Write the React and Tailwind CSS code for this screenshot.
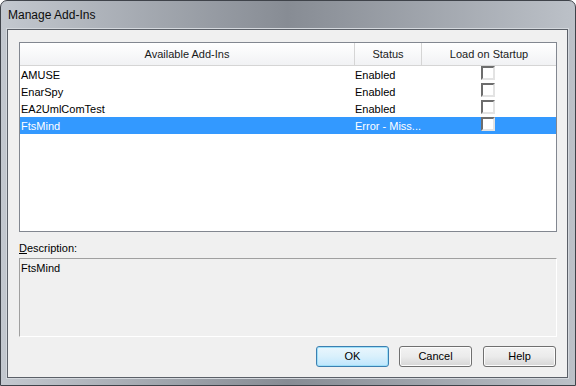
import React from 'react'

const rows = [
    { name: 'AMUSE', status: 'Enabled' },
    { name: 'EnarSpy', status: 'Enabled' },
    { name: 'EA2UmlComTest', status: 'Enabled' },
    { name: 'FtsMind', status: 'Error - Miss...', selected: true },
]

function Checkbox() {
    return (
        <div className="w-[14px] h-[14px] bg-white border-2 border-t-[#6d6d6d] border-l-[#6d6d6d] border-r-[#e3e3e3] border-b-[#e3e3e3]"></div>
    )
}

function Button({ children, primary }) {
    return (
        <button
            className={
                primary
                    ? 'w-[73px] h-[21px] rounded-[3px] border border-[#3c7fb1] bg-gradient-to-b from-[#eaf6fd] via-[#d9f0fc] to-[#bee6fd] text-[11px] text-black shadow-[inset_0_0_0_1px_#9fe0f8]'
                    : 'w-[73px] h-[21px] rounded-[3px] border border-[#707070] bg-gradient-to-b from-[#f3f3f3] via-[#ebebeb] to-[#d6d6d6] text-[11px] text-black shadow-[inset_0_0_0_1px_#fcfcfc]'
            }
        >
            {children}
        </button>
    )
}

export default function App() {
    return (
        <div className="w-[576px] h-[386px] flex flex-col rounded-t-[7px] border border-[#3f434a] bg-gradient-to-r from-[#c3c8cf] via-[#878c94] to-[#bcc1c8] pl-[6px] pr-[7px] pb-[7px] font-['Liberation_Sans',Arial,sans-serif] text-[11px] text-black">
            <div className="h-[28px] flex items-center pl-[1px] text-[12px] text-[#0c0c0c]">Manage Add-Ins</div>

            <div className="flex-1 flex flex-col border border-[#5b6068] bg-[#f0f0f0] pt-[12px] pl-[11px] pr-[10px] shadow-[0_0_0_1px_#d4d8dd]">
                <div className="h-[190px] flex flex-col border border-[#828790] bg-white">
                    <div className="h-[23px] grid grid-cols-[335px_67px_1fr] border-b border-[#d5d5d5] bg-gradient-to-b from-[#ffffff] to-[#f1f2f4] text-[#1a1a1a]">
                        <div className="flex items-center justify-center border-r border-[#d5d5d5]">Available Add-Ins</div>
                        <div className="flex items-center justify-center border-r border-[#d5d5d5]">Status</div>
                        <div className="flex items-center justify-center">Load on Startup</div>
                    </div>
                    {rows.map((row) => (
                        <div
                            key={row.name}
                            className={
                                'h-[17px] grid grid-cols-[335px_67px_1fr] leading-[17px] ' +
                                (row.selected ? 'bg-[#3399ff] text-white' : 'text-black')
                            }
                        >
                            <div className="pl-[1px] pt-[1px]">{row.name}</div>
                            <div className="pt-[1px] whitespace-nowrap overflow-hidden">{row.status}</div>
                            <div className="flex justify-center pr-[2px]">
                                <Checkbox />
                            </div>
                        </div>
                    ))}
                </div>

                <div className="mt-[8px] h-[16px] leading-[16px]">
                    <span className="underline">D</span>escription:
                </div>
                <div className="mt-[2px] h-[79px] border border-t-[#a0a0a0] border-l-[#a0a0a0] border-r-white border-b-white pl-[1px] pt-[1px] text-black">
                    FtsMind
                </div>

                <div className="mt-[9px] flex justify-end gap-[10px] pr-[1px]">
                    <Button primary>OK</Button>
                    <Button>Cancel</Button>
                    <div className="ml-[1px]">
                        <Button>Help</Button>
                    </div>
                </div>
            </div>
        </div>
    )
}
